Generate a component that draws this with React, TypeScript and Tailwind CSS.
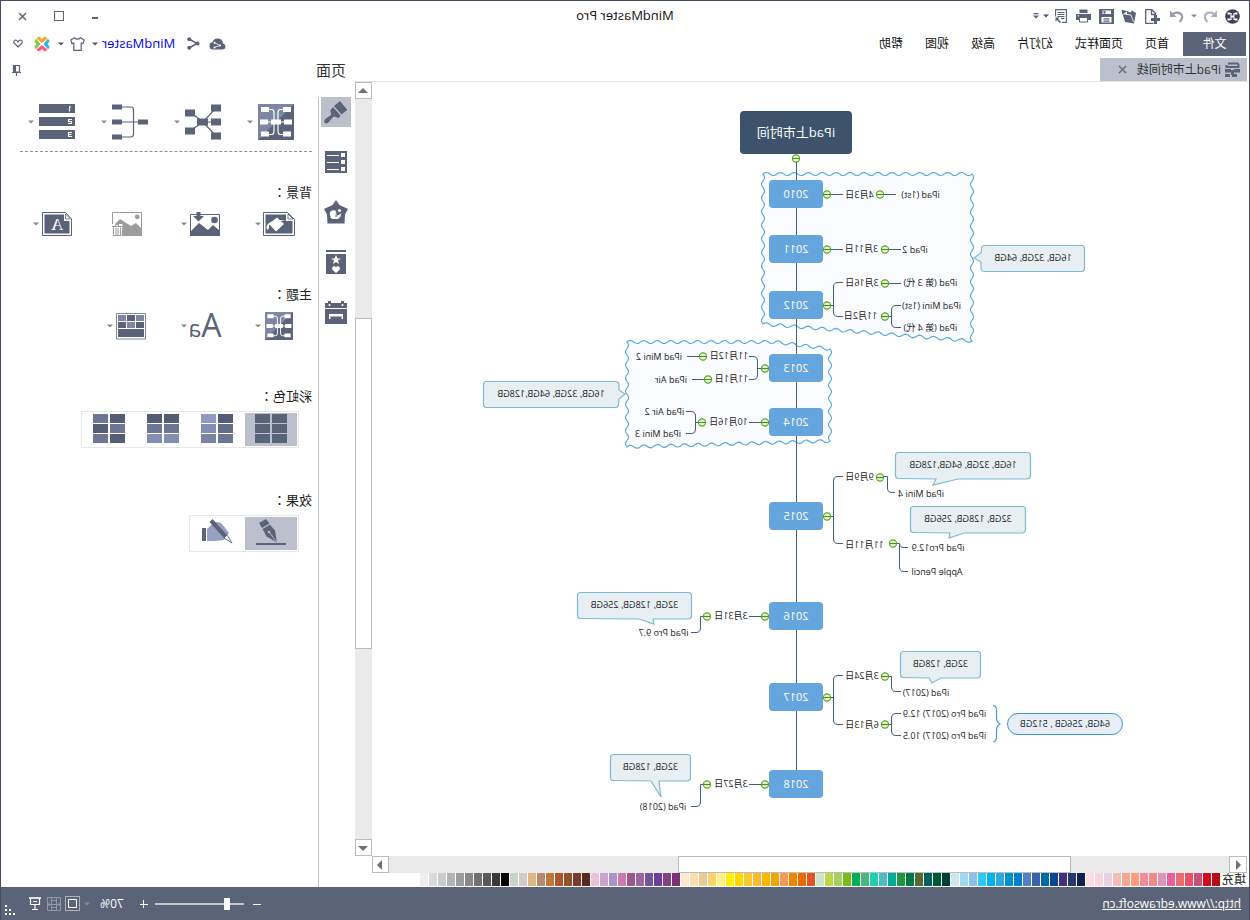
import type { ReactNode } from "react";

const paletteColors = [
  "#b5081b", "#d7091f", "#c75178", "#e85264", "#ea6b70", "#e5609c", "#e195b4", "#ef8c87", "#f18d9b", "#ff9e78",
  "#f1a993", "#f5bcbc", "#e8d3e5", "#fdd2e2", "#fddde2", "#10214d", "#243a70", "#45307a", "#084890", "#0069a6",
  "#3d62ac", "#5382c3", "#0080d0", "#0090cc", "#2ea8e0", "#00b2f0", "#2fc8f8", "#8bc1e9", "#9dd8ee", "#cce9f3",
  "#003f33", "#005930", "#00625e", "#566b30", "#007a47", "#1f9640", "#00ab9b", "#4fbdbd", "#1fcdb0", "#48b87d",
  "#00b052", "#7db916", "#a3d062", "#bed748", "#cde5c9", "#e5531e", "#ed6a00", "#f08300", "#f39b56", "#f2a500",
  "#fdb400", "#fdb732", "#f9c931", "#ffd900", "#fff000", "#fdf180", "#fdd370", "#eacb97", "#fddcae", "#fde9d0",
  "#7b3070", "#854086", "#68429a", "#75539b", "#9a65a1", "#9e5888", "#cc7bb0", "#ab92d1", "#c8a5c9", "#ecc1dc",
  "#5a2a1a", "#763c30", "#95502c", "#aa5828", "#bf783c", "#b5896f", "#deb684", "#d4cbc6", "#c8d3cb", "#000000",
  "#3e3838", "#595959", "#707270", "#878887", "#9b9d9c", "#b2b4b3", "#cacccb", "#dadada", "#ededed",
];

const menus = ["首页", "页面样式", "幻灯片", "高级", "视图", "帮助"];

type Point = [number, number];

const years: { label: string; y: number }[] = [
  { label: "2010", y: 98 },
  { label: "2011", y: 153 },
  { label: "2012", y: 209 },
  { label: "2013", y: 272 },
  { label: "2014", y: 326 },
  { label: "2015", y: 420 },
  { label: "2016", y: 520 },
  { label: "2017", y: 601 },
  { label: "2018", y: 688 },
];

/* Topic labels: x and w span the text, y is its middle line. */
const topics: { text: string; x: number; w: number; y: number }[] = [
  { text: "4月3日", x: 376, w: 27, y: 113 },
  { text: "iPad (1st)", x: 309, w: 39, y: 113 },
  { text: "3月11日", x: 372, w: 31, y: 167 },
  { text: "iPad 2", x: 321, w: 26, y: 168 },
  { text: "3月16日", x: 371, w: 32, y: 201 },
  { text: "iPad (第 3 代)", x: 291, w: 55, y: 201 },
  { text: "11月2日", x: 373, w: 31, y: 234 },
  { text: "iPad Mini (1st)", x: 288, w: 59, y: 224 },
  { text: "iPad (第 4 代)", x: 291, w: 55, y: 246 },
  { text: "11月12日", x: 502, w: 36, y: 274 },
  { text: "iPad Mini 2", x: 567, w: 46, y: 275 },
  { text: "11月1日", x: 502, w: 31, y: 297 },
  { text: "iPad Air", x: 562, w: 32, y: 298 },
  { text: "10月16日", x: 502, w: 37, y: 340 },
  { text: "iPad Air 2", x: 565, w: 39, y: 330 },
  { text: "iPad Mini 3", x: 568, w: 46, y: 352 },
  { text: "9月9日", x: 376, w: 27, y: 395 },
  { text: "iPad Mini 4", x: 305, w: 46, y: 412 },
  { text: "11月11日", x: 365, w: 39, y: 463 },
  { text: "iPad Pro12.9", x: 284, w: 54, y: 466 },
  { text: "Apple Pencil", x: 286, w: 52, y: 490 },
  { text: "3月31日", x: 502, w: 32, y: 534 },
  { text: "iPad Pro 9.7", x: 560, w: 51, y: 551 },
  { text: "3月24日", x: 371, w: 32, y: 594 },
  { text: "iPad (2017)", x: 300, w: 46, y: 611 },
  { text: "6月13日", x: 371, w: 32, y: 643 },
  { text: "iPad Pro (2017) 12.9", x: 263, w: 83, y: 632 },
  { text: "iPad Pro (2017) 10.5", x: 263, w: 83, y: 654 },
  { text: "3月27日", x: 502, w: 32, y: 702 },
  { text: "iPad (2018)", x: 563, w: 46, y: 725 },
];

const toggles: Point[] = [
  [453, 76], [422, 112], [369, 112], [422, 167], [364, 167], [422, 223], [364, 201], [364, 234],
  [484, 286], [546, 274], [541, 297], [484, 340], [547, 340], [422, 434], [369, 395], [356, 461],
  [484, 534], [542, 534], [422, 615], [364, 594], [364, 642], [484, 702], [542, 702],
];

const connectors = [
  "M452.5 80V688",
  "M418 112.5H406M365 112.5H353",
  "M418 167.5H406M360 167.5H348",
  "M418 223.5H415.5M406 200.5H411Q415.5 200.5 415.5 205V230Q415.5 234.5 411 234.5H406",
  "M360 201.5H348M360 234.5H357.5M348 223.5H353Q357.5 223.5 357.5 228V241Q357.5 245.5 353 245.5H348",
  "M488 286.5H491.5M500 274.5H496Q491.5 274.5 491.5 279V293Q491.5 297.5 496 297.5H500",
  "M550 274.5H562M545 297.5H557M488 340.5H500M551 340.5H553.5",
  "M563 329.5H558Q553.5 329.5 553.5 334V347Q553.5 351.5 558 351.5H563",
  "M418 434.5H415.5M406 394.5H411Q415.5 394.5 415.5 399V457Q415.5 461.5 411 461.5H406",
  "M365 394.5H361.5V406Q361.5 410.5 357 410.5H354",
  "M352 461.5H349.5V485Q349.5 489.5 345 489.5H341M349.5 461.5Q349.5 465.5 345 465.5H341",
  "M488 534.5H500M546 534.5H548.5V546Q548.5 550.5 553 550.5H558",
  "M418 615.5H415.5M406 593.5H411Q415.5 593.5 415.5 598V638Q415.5 642.5 411 642.5H406",
  "M360 594.5H357.5V605Q357.5 609.5 353 609.5H348",
  "M360 642.5H357.5M348 631.5H353Q357.5 631.5 357.5 636V649Q357.5 653.5 353 653.5H348",
  "M488 702.5H500M546 702.5H548.5V720Q548.5 724.5 553 724.5H558",
];

/* Callouts: the tail is three points, ordered clockwise round the box. */
const callouts: { text: string; x: number; y: number; w: number; side: "left" | "right" | "bottom"; tail: Point[] }[] = [
  { text: "16GB, 32GB, 64GB", x: 164, y: 163, w: 104, side: "right", tail: [[268, 171], [275, 176], [268, 180]] },
  { text: "16GB, 32GB, 64GB,128GB", x: 630, y: 299, w: 136, side: "left", tail: [[630, 317], [624, 312], [630, 308]] },
  { text: "16GB, 32GB, 64GB,128GB", x: 218, y: 370, w: 136, side: "bottom", tail: [[313, 397], [316, 403], [291, 397]] },
  { text: "32GB, 128GB, 256GB", x: 223, y: 424, w: 116, side: "bottom", tail: [[299, 451], [300, 456], [285, 451]] },
  { text: "32GB, 128GB, 256GB", x: 557, y: 510, w: 115, side: "bottom", tail: [[610, 537], [595, 542], [596, 537]] },
  { text: "32GB, 128GB", x: 268, y: 569, w: 81, side: "bottom", tail: [[320, 596], [317, 601], [308, 596]] },
  { text: "32GB, 128GB", x: 558, y: 672, w: 81, side: "bottom", tail: [[598, 699], [588, 715], [590, 699]] },
];

const CALLOUT_H = 26;

function calloutPath(c: (typeof callouts)[number]) {
  const l = c.x + 0.5;
  const t = c.y + 0.5;
  const r = c.x + c.w - 0.5;
  const b = c.y + CALLOUT_H + 0.5;
  const tail = "L" + c.tail.map((p) => p.join(" ")).join("L");
  return [
    `M${l + 3} ${t}H${r - 3}Q${r} ${t} ${r} ${t + 3}`,
    c.side === "right" ? tail : "",
    `V${b - 3}Q${r} ${b} ${r - 3} ${b}`,
    c.side === "bottom" ? tail : "",
    `H${l + 3}Q${l} ${b} ${l} ${b - 3}`,
    c.side === "left" ? tail : "",
    `V${t + 3}Q${l} ${t} ${l + 3} ${t}Z`,
  ].join("");
}

function wavyOutline(corners: Point[]) {
  const out: string[] = [];
  corners.forEach(([x1, y1], i) => {
    const [x2, y2] = corners[(i + 1) % corners.length];
    const len = Math.hypot(x2 - x1, y2 - y1);
    const turns = Math.max(1, Math.round(len / 14));
    const dx = (x2 - x1) / len;
    const dy = (y2 - y1) / len;
    for (let s = 0; s < len; s += 1) {
      const a = Math.sin((s / len) * turns * Math.PI * 2) * 1.5;
      out.push(`${(x1 + dx * s - dy * a).toFixed(1)} ${(y1 + dy * s + dx * a).toFixed(1)}`);
    }
  });
  return "M" + out.join("L") + "Z";
}

const boundaries: Point[][] = [
  [[277, 92], [486, 92], [486, 242], [277, 259]],
  [[419, 267], [474, 260], [622, 260], [622, 365], [419, 359]],
];

function MindMap() {
  return (
    <div className="relative h-[774px] shrink-0 overflow-hidden">
      <svg className="absolute inset-0 h-full w-full" fill="none" aria-hidden="true">
        {boundaries.map((b, i) => (
          <path key={i} d={wavyOutline(b)} fill="#fafcff" stroke="#5aa9df" strokeWidth="1.2" />
        ))}
        {connectors.map((d) => (
          <path key={d} d={d} stroke="#3f5f85" />
        ))}
        {callouts.map((c) => (
          <path key={c.y} d={calloutPath(c)} fill="#e8eff3" stroke="#7fbbd0" strokeWidth="1.2" />
        ))}
        <path d="M256 623.500Q252.500 624 252.500 628V636Q252.500 640 249 642Q252.500 644 252.500 648V655Q252.500 659.500 256 660" stroke="#3f9ad8" strokeWidth="1.2" />
        {toggles.map(([x, y]) => (
          <g key={`${x}-${y}`} transform={`translate(${x} ${y + 0.5})`}>
            <circle r="3.600" fill="#f0fae4" stroke="#5aa51e" strokeWidth="1.100" />
            <path d="M-3.500 0H3.500" stroke="#4a9a10" strokeWidth="1.200" />
          </g>
        ))}
      </svg>
      <div className="absolute top-[29px] left-[397px] flex h-[43px] w-[112px] items-center justify-center rounded bg-[#3d526b] text-[13px] text-white">
        iPad上市时间
      </div>
      {years.map((n) => (
        <div
          key={n.label}
          className="absolute left-[426px] flex h-7 w-[54px] items-center justify-center rounded bg-[#65a5de] text-[11px] text-white"
          style={{ top: n.y }}
        >
          {n.label}
        </div>
      ))}
      {topics.map((n) => (
        <div
          key={`${n.text}-${n.y}`}
          className="absolute flex h-4 items-center justify-center text-[9px] whitespace-nowrap text-[#222222]"
          style={{ left: n.x, top: n.y - 8, width: n.w }}
        >
          {n.text}
        </div>
      ))}
      {callouts.map((c) => (
        <div
          key={c.y}
          className="absolute flex h-[26px] items-center justify-center text-[9px] whitespace-nowrap text-[#222222]"
          style={{ left: c.x, top: c.y, width: c.w }}
        >
          {c.text}
        </div>
      ))}
      <div className="absolute top-[631px] left-[126px] flex h-[22px] w-[116px] items-center justify-center rounded-full border border-[#3f95d8] bg-[#e7eef8] text-[9px] whitespace-nowrap text-[#222222]">
        64GB, 256GB , 512GB
      </div>
    </div>
  );
}

function Caret({ light = false }: { light?: boolean }) {
  return (
    <svg className={light ? "h-1 w-1.5 shrink-0 text-[#8a8a8a]" : "h-1 w-1.5 shrink-0 text-[#4d5266]"} viewBox="0 0 6 4" fill="currentColor" aria-hidden="true">
      <path d="M0 .5H6L3 3.500Z" />
    </svg>
  );
}

function Icon({ w, h, children }: { w: number; h: number; children: ReactNode }) {
  return (
    <svg width={w} height={h} viewBox={`0 0 ${w} ${h}`} fill="#5b6378" className="shrink-0" aria-hidden="true">
      {children}
    </svg>
  );
}

function BarButton({ label, className, children }: { label: string; className: string; children: ReactNode }) {
  return (
    <button type="button" aria-label={label} className={`flex h-6 shrink-0 items-center justify-center ${className}`}>
      {children}
    </button>
  );
}

function QuickAccess() {
  return (
    <div className="flex items-center pl-1">
      <BarButton label="MindMaster" className="w-6">
        <Icon w={15} h={15}>
          <circle cx="7.500" cy="7.500" r="7.300" fill="#3f445a" />
          <path d="M3.500 4.500H6V7.500H9V4.500H11.500M3.500 10.500H6V7.500H9V10.500H11.500" fill="none" stroke="#fff" strokeWidth="1.100" />
          <path d="M2.500 3.500H5V5.500H2.500ZM10 3.500H12.500V5.500H10ZM2.500 9.500H5V11.500H2.500ZM10 9.500H12.500V11.500H10ZM6.500 6.500H8.500V8.500H6.500Z" fill="#fff" />
        </Icon>
      </BarButton>
      <BarButton label="撤销" className="w-[22px]">
        <Icon w={14} h={13}>
          <path d="M3 3.800Q8.500 1 11.500 4.500Q13.500 8.500 9.500 12" fill="none" stroke="#acaeb6" strokeWidth="2" />
          <path d="M0 .5V7H6.500Z" fill="#acaeb6" />
        </Icon>
      </BarButton>
      <BarButton label="撤销列表" className="w-2.5"><Caret light /></BarButton>
      <BarButton label="重做" className="w-6">
        <Icon w={14} h={13}>
          <path d="M11 3.800Q5.500 1 2.500 4.500Q.5 8.500 4.500 12" fill="none" stroke="#9c9da3" strokeWidth="2.200" />
          <path d="M14 .5V7H7.500Z" fill="#9c9da3" />
        </Icon>
      </BarButton>
      <BarButton label="新建" className="w-6">
        <Icon w={15} h={15}>
          <path d="M4 5L8 .7H14.300V14.300H6.500M8.500 1V5.500H4" fill="none" stroke="#5b6378" strokeWidth="1.300" />
          <path d="M4.500 6V15M0 10.500H9" stroke="#5b6378" strokeWidth="3" />
        </Icon>
      </BarButton>
      <BarButton label="打开" className="w-[23px]">
        <Icon w={16} h={15}>
          <path d="M1 4L5 1.500L6.500 3.500L10 2V5L14.500 4.500L12 13L3 14.500Z" />
          <path d="M3.500 13L6 6L14.500 4.800" fill="none" stroke="#fff" strokeWidth=".8" />
          <path d="M9.500 2.500L15.500 .5L14.500 5.500L12.500 4Z" />
        </Icon>
      </BarButton>
      <BarButton label="保存" className="w-[23px]">
        <Icon w={15} h={15}>
          <path d="M0 0H15V15H0Z" />
          <path d="M3 1.500H11.500V5H3ZM2.500 8H12.500V13.500H2.500Z" fill="#fff" />
          <path d="M8.500 2H10.500V4.500H8.500ZM4.500 9.300H10.500V10.500H4.500ZM4.500 11.500H10.500V12.700H4.500Z" />
        </Icon>
      </BarButton>
      <BarButton label="打印" className="w-[23px]">
        <Icon w={15} h={14}>
          <path d="M3.500 .5H11.500V4H3.500ZM0 5H15V11H0Z" />
          <path d="M3.500 8.500H11.500V13H3.500Z" fill="#fff" stroke="#5b6378" />
          <path d="M12 6.300H13.300V7.500H12Z" fill="#fff" />
        </Icon>
      </BarButton>
      <BarButton label="导出" className="w-[21px]">
        <Icon w={12} h={14}>
          <path d="M5 13.400H.6V.6H11.400V7.500M2.500 3.500H9.500M2.500 5.500H9.500M2.500 7.500H9.500M2.500 9.500H6" fill="none" stroke="#5b6378" strokeWidth="1.100" />
          <path d="M6.500 13.500L10.500 9.500" stroke="#5b6378" strokeWidth="1.600" />
          <path d="M7.500 8.500H11.500V12.500Z" />
        </Icon>
      </BarButton>
      <BarButton label="导出选项" className="w-2.5"><Caret /></BarButton>
      <BarButton label="自定义快速访问" className="w-2.5">
        <Icon w={6} h={6}>
          <path d="M.5 0H5.500V1.200H.5ZM0 2.500H6L3 5.500Z" />
        </Icon>
      </BarButton>
    </div>
  );
}

function WindowControls() {
  return (
    <div className="flex items-center justify-end pr-1">
      <BarButton label="最小化" className="w-9">
        <Icon w={10} h={10}><path d="M2 6H8V8H2Z" fill="#666" /></Icon>
      </BarButton>
      <BarButton label="最大化" className="w-9">
        <Icon w={10} h={10}><path d="M.5 .5H9.500V9.500H.5Z" fill="none" stroke="#666" strokeWidth="1.200" /></Icon>
      </BarButton>
      <BarButton label="关闭" className="w-9">
        <Icon w={9} h={9}><path d="M1 1L8 8M8 1L1 8" stroke="#666" strokeWidth="1.500" /></Icon>
      </BarButton>
    </div>
  );
}

function AccountBar() {
  return (
    <div className="flex items-center pr-[5px]">
      <BarButton label="云" className="w-6">
        <Icon w={17} h={12}>
          <path d="M4 11.500Q.5 11.500 .5 8.500Q.5 6 3 5.500Q3.500 .5 8.500 .5Q12.500 .5 13.300 4Q16.500 4.500 16.500 8Q16.500 11.500 13 11.500Z" />
          <path d="M12 4.500L6 7.500L12 9.500" fill="none" stroke="#fff" strokeWidth=".8" />
          <circle cx="11.500" cy="4.700" r="1" fill="#fff" /><circle cx="6" cy="7.500" r="1" fill="#fff" /><circle cx="11.500" cy="9.500" r="1" fill="#fff" />
        </Icon>
      </BarButton>
      <BarButton label="分享" className="w-6">
        <Icon w={13} h={13}>
          <path d="M11 2L3 6.500L11 11" fill="none" stroke="#5b6378" strokeWidth="1.500" />
          <circle cx="10.700" cy="2.200" r="2" /><circle cx="2.500" cy="6.500" r="2" /><circle cx="10.700" cy="10.800" r="2" />
        </Icon>
      </BarButton>
      <a href="#account" className="ml-1.5 text-[13px] text-[#0000f0]">MindMaster</a>
      <BarButton label="账户" className="ml-0.5 w-2.5"><Caret /></BarButton>
      <BarButton label="皮肤" className="w-6">
        <Icon w={15} h={14}>
          <path d="M4.500 .7L.8 3L2 6.500L3.800 6V13.300H11.200V6L13 6.500L14.200 3L10.500 .7Q7.500 3.500 4.500 .7Z" fill="none" stroke="#5b6378" strokeWidth="1.200" />
        </Icon>
      </BarButton>
      <BarButton label="皮肤选项" className="w-2.5"><Caret /></BarButton>
      <BarButton label="Edraw" className="ml-0.5 w-6">
        <Icon w={16} h={16}>
          <path d="M8 7L2.500 2.500Q3.500 .3 5.500 .8L8 3L10.500 .8Q12.500 .3 13.500 2.500Z" fill="#f7a72a" />
          <path d="M8 9L2.500 13.500Q3.500 15.700 5.500 15.200L8 13L10.500 15.200Q12.500 15.700 13.500 13.500Z" fill="#fb5a84" />
          <path d="M6.500 8L2.200 3Q0 3.500 .6 5.500L2.500 8L.6 10.500Q0 12.500 2.200 13Z" fill="#33b3e5" />
          <path d="M9.500 8L13.800 3Q16 3.500 15.400 5.500L13.500 8L15.400 10.500Q16 12.500 13.800 13Z" fill="#8cc63f" />
        </Icon>
      </BarButton>
      <BarButton label="收藏" className="w-6">
        <Icon w={10} h={9}>
          <path d="M5 8L1 4Q.2 1.500 2.500 1Q4 1 5 3Q6 1 7.500 1Q9.800 1.500 9 4Z" fill="none" stroke="#5b6378" strokeWidth="1.200" />
        </Icon>
      </BarButton>
    </div>
  );
}

function ScrollArrow({ label, dir, className }: { label: string; dir: "up" | "down" | "left" | "right"; className: string }) {
  const d = { up: "M0 7L5 2L10 7Z", down: "M0 3L5 8L10 3Z", left: "M7 0L2 5L7 10Z", right: "M3 0L8 5L3 10Z" }[dir];
  return (
    <button type="button" aria-label={label} className={`flex shrink-0 items-center justify-center border border-[#bcbcbc] bg-white ${className}`}>
      <svg width="10" height="10" viewBox="0 0 10 10" fill="#707070" aria-hidden="true"><path d={d} /></svg>
    </button>
  );
}

function MapGlyph({ size }: { size: number }) {
  return (
    <svg width={size} height={size} viewBox="0 0 36 36" aria-hidden="true">
      <path d="M0 0H36V36H0Z" fill="#5b6378" />
      <path d="M0 0H36V36Z" fill="#7d86a2" />
      <path d="M9 5.500H14Q16 5.500 16 9V27Q16 30.500 14 30.500H9M27 5.500H22Q20 5.500 20 9V27Q20 30.500 22 30.500H27M8 18H28" fill="none" stroke="#fff" strokeWidth="1.200" />
      <path d="M3 3H11V8H3ZM25 3H33V8H25ZM2 15.500H10V20.500H2ZM26 15.500H34V20.500H26ZM3 27.500H11V32.500H3ZM25 27.500H33V32.500H25ZM13 15.500H23V20.500H13Z" fill="#fff" />
    </svg>
  );
}

function RadialGlyph() {
  return (
    <Icon w={36} h={36}>
      <path d="M5 4L18 18L31 8M5 18H18M5 32L18 18L31 27" fill="none" stroke="#5b6378" strokeWidth="1.200" />
      <path d="M0 .5H10V7.500H0ZM0 14.500H10V21.500H0ZM0 28.500H10V35.500H0ZM26 5.500H36V12.500H26ZM26 23.500H36V30.500H26ZM13 14.500H24V21.500H13Z" />
    </Icon>
  );
}

function BracketGlyph() {
  return (
    <Icon w={36} h={36}>
      <path d="M0 18H36M26 3H17Q14.500 3 14.500 6V30Q14.500 33 17 33H26" fill="none" stroke="#5b6378" strokeWidth="1.200" />
      <path d="M0 15.500H10V20.500H0ZM26 .5H36V5.500H26ZM26 15.500H36V20.500H26ZM26 30.500H36V35.500H26Z" />
    </Icon>
  );
}

function NumberedGlyph() {
  return (
    <Icon w={36} h={36}>
      <path d="M0 0H36V9H0ZM0 13H36V22H0ZM0 26H36V35H0Z" />
      <path d="M4 3.500L5.500 2.500V7.500M3 15.500H6.500V17.500H3.500V19.500H7M3 28.500H6.500V32.500H3M3.500 30.500H6.500" fill="none" stroke="#fff" strokeWidth="1.100" />
    </Icon>
  );
}

function FillGlyph() {
  return (
    <Icon w={32} h={24}>
      <path d="M7.500 .5H31.500V23.500H.5V7.500Z" fill="#fff" stroke="#5b6378" />
      <path d="M9 2.500H29.500V21.500H2.500V9H9Z" />
      <path d="M2 7L7 2V7Z" fill="#fff" stroke="#5b6378" strokeWidth=".8" />
      <path d="M11 12L18 5.500L26 12L19 19.500Z" fill="#fff" />
      <path d="M9 8.500Q20 7 26 11Q30 14 27.500 18Q25.500 17 26 13L19 9.500Z" fill="#fff" />
    </Icon>
  );
}

function InsertPictureGlyph() {
  return (
    <Icon w={30} h={24}>
      <path d="M.5 2.500H29.500V23.500H.5Z" fill="#fff" stroke="#5b6378" />
      <circle cx="5.500" cy="8" r="3.300" />
      <path d="M0 24V19L7 13L12 18L21 11L30 20V24Z" />
      <path d="M19.500 0H23.500V4H27L21.500 9.500L16 4H19.500Z" />
    </Icon>
  );
}

function RemovePictureGlyph() {
  return (
    <Icon w={30} h={24}>
      <path d="M.5 .5H29.500V23.500H.5Z" fill="#fff" stroke="#9d9d9d" />
      <circle cx="4.800" cy="4.800" r="2.400" fill="#9d9d9d" />
      <path d="M0 24V17L6 11L11 14L22 7L30 15V24Z" fill="#9d9d9d" />
      <path d="M19.500 12H31V25H20.500Z" fill="#fff" />
      <path d="M20 14.500H30M23.500 14V12.500H26.500V14M21.500 15.500V23.500H28.500V15.500M24 16V23M26 16V23" fill="none" stroke="#9d9d9d" />
    </Icon>
  );
}

function WatermarkGlyph() {
  return (
    <svg width="30" height="24" viewBox="0 0 30 24" aria-hidden="true">
      <path d="M6.500 .5H29.500V23.500H.5V7Z" fill="#fff" stroke="#5b6378" />
      <path d="M8 2.500H27.500V21.500H2.500V9H8Z" fill="#5b6378" />
      <path d="M1.500 7L6.500 2V7Z" fill="#fff" stroke="#5b6378" strokeWidth=".8" />
      <text x="15" y="18" textAnchor="middle" className="font-['Liberation_Serif',serif] text-[17px]" fill="#fff">A</text>
    </svg>
  );
}

function TableGlyph() {
  return (
    <Icon w={30} h={27}>
      <path d="M.5 .5H29.500V26H.5Z" fill="#fff" stroke="#7d86a2" />
      <path d="M2 2H10V8H2ZM20 2H28V8H20ZM11 9H19V15H11Z" fill="#7d86a2" />
      <path d="M11 2H19V8H11ZM2 9H10V15H2ZM20 9H28V15H20ZM2 16H28V24H2Z" />
    </Icon>
  );
}

function GridGlyph({ colors }: { colors: string[] }) {
  return (
    <Icon w={32} h={29}>
      {colors.map((c, i) => (
        <rect key={i} x={(i % 2) * 17} y={Math.floor(i / 2) * 10} width="15" height="9" fill={c} />
      ))}
    </Icon>
  );
}

const rainbowGrids = [
  ["#5b6378", "#5b6378", "#5b6378", "#5b6378", "#5b6378", "#5b6378"],
  ["#555d74", "#8f9cc0", "#646c88", "#838fb2", "#6d7694", "#7983a4"],
  ["#555d74", "#555d74", "#6d7694", "#6d7694", "#838fb2", "#838fb2"],
  ["#555d74", "#6d7694", "#6d7694", "#555d74", "#555d74", "#6d7694"],
];

function PenGlyph() {
  return (
    <Icon w={32} h={26}>
      <path d="M1 24H31V26H1Z" />
      <path d="M28 4L21 0L17.500 4.500L25 9Z" />
      <path d="M24.500 10L17 5.800L12 11.500L10 23.500L20.500 17.500Z" />
      <path d="M10.500 23L17.500 13.500" stroke="#bbc0cc" strokeWidth=".9" />
      <circle cx="18" cy="13" r="1.300" fill="#bbc0cc" />
    </Icon>
  );
}

function HandGlyph() {
  return (
    <Icon w={32} h={26}>
      <path d="M27 9H31V22H27Z" />
      <path d="M26 10L19 3.500Q14 2 11 5L4 14L9 21L18 22H26Z" fill="#95a0c2" />
      <path d="M20.500 0L23.500 3L9 19L6 16Z" />
      <path d="M6 16L9 19L1 24Z" fill="#fff" stroke="#5b6378" strokeWidth=".9" />
    </Icon>
  );
}

function ToolItem({ label, className, iconClass, caret = true, children }: { label: string; className: string; iconClass: string; caret?: boolean; children: ReactNode }) {
  return (
    <button type="button" aria-label={label} className={`flex shrink-0 items-center ${className}`}>
      <span className={`flex shrink-0 items-center justify-center ${iconClass}`}>{children}</span>
      {caret && <Caret light />}
    </button>
  );
}

function SectionTitle({ children }: { children: ReactNode }) {
  return (
    <h3>
      {children}
      <span className="font-['Noto_Sans_CJK_TC',sans-serif]">：</span>
    </h3>
  );
}

function SideTabs() {
  return (
    <nav aria-label="面板" className="flex w-[37px] shrink-0 flex-col gap-5 border-r border-[#c4c4c4] pl-1">
      <button type="button" aria-label="页面" className="flex h-[30px] w-[30px] items-center justify-center bg-[#bbc0cc]">
        <Icon w={24} h={23}>
          <path d="M8 0L.7 9L6.500 13.500L14 5Z" />
          <path d="M15 6L7.500 14.500L9.500 17L14.500 15.500L19.500 21.500Q22 23.500 23.500 21.500Q24.500 19.500 22 17.500L17 14L17.500 9Z" />
        </Icon>
      </button>
      <button type="button" aria-label="大纲" className="flex h-[30px] w-[30px] items-center justify-center">
        <Icon w={22} h={22}>
          <path d="M0 0H22V22H0Z" />
          <path d="M2 2H6V6H2ZM2 9H6V13H2ZM2 16H6V20H2ZM8 4H20V5H8ZM8 11H20V12H8ZM8 18H20V19H8Z" fill="#fff" />
        </Icon>
      </button>
      <button type="button" aria-label="图标" className="flex h-[30px] w-[30px] items-center justify-center">
        <Icon w={24} h={24}>
          <path d="M12 0L15.500 5L24 9L21 14.500L20.500 23.500H3.500L3 14.500L0 9L8.500 5Z" />
          <circle cx="14.500" cy="14" r="3.700" fill="#fff" /><circle cx="8.500" cy="10.500" r="1.600" fill="#fff" />
          <path d="M6.500 13Q9 16 18 17L16 19H10Q7 17 6.500 13Z" fill="#fff" />
          <path d="M11.500 10L12 17" stroke="#5b6378" />
        </Icon>
      </button>
      <button type="button" aria-label="剪贴画" className="flex h-[30px] w-[30px] items-center justify-center">
        <Icon w={20} h={24}>
          <path d="M0 0H20V2H0ZM0 4H20V24H0Z" />
          <path d="M10 5L11.500 8.500H15L12 10.500L13 14L10 12L7 14L8 10.500L5 8.500H8.500ZM10 23L6.200 19.500Q5.800 16 8.500 16L10 17L11.500 16Q14.200 16 13.800 19.500Z" fill="#fff" />
        </Icon>
      </button>
      <button type="button" aria-label="任务" className="flex h-[30px] w-[30px] items-center justify-center">
        <Icon w={22} h={23}>
          <path d="M0 2H3V0H6V2H16V0H19V2H22V7H0ZM0 8H22V23H0Z" />
          <circle cx="4.500" cy="4" r="1" fill="#fff" /><circle cx="17.500" cy="4" r="1" fill="#fff" />
          <path d="M4 13H18V18H16.500V15.500H5.500V18H4Z" fill="#fff" />
        </Icon>
      </button>
    </nav>
  );
}

function PagePanel() {
  return (
    <aside className="flex w-[354px] shrink-0 flex-col">
      <header className="flex h-[41px] shrink-0 items-center justify-between pr-[11px] pb-3 pl-[9px]">
        <h2 className="text-[15px] text-[#333333]">页面</h2>
        <button type="button" aria-label="固定">
          <Icon w={9} h={11}>
            <path d="M1.500 .5H7.500V7H1.500ZM0 7.500H9M4.500 8V11" fill="none" stroke="#5b6378" strokeWidth="1.200" />
            <path d="M5 0H8V7H5Z" />
          </Icon>
        </button>
      </header>
      <div className="flex flex-1">
        <SideTabs />
        <div className="flex flex-1 flex-col pr-[19px] pl-1.5 text-[13px] leading-5 text-[#222222]">
          <div className="flex border-b border-dashed border-[#8f8f99] pt-[7px] pb-[11px] pl-[18px]">
            <ToolItem label="布局" className="w-[73px] gap-[5px]" iconClass="w-9"><MapGlyph size={36} /></ToolItem>
            <ToolItem label="分布" className="w-[73px] gap-[5px]" iconClass="w-9"><RadialGlyph /></ToolItem>
            <ToolItem label="连接线" className="w-[73px] gap-[5px]" iconClass="w-9"><BracketGlyph /></ToolItem>
            <ToolItem label="编号" className="w-12 gap-[5px]" iconClass="w-9"><NumberedGlyph /></ToolItem>
          </div>
          <section className="mt-[30px]">
            <SectionTitle>背景</SectionTitle>
            <div className="mt-2 flex pl-[17px]">
              <ToolItem label="背景颜色" className="w-[74px] gap-0.5" iconClass="h-7 w-8"><FillGlyph /></ToolItem>
              <ToolItem label="插入图片" className="w-[74px] gap-0.5" iconClass="h-7 w-8"><InsertPictureGlyph /></ToolItem>
              <ToolItem label="移除图片" className="w-[74px] gap-0.5 pl-1" iconClass="h-7 w-8" caret={false}><RemovePictureGlyph /></ToolItem>
              <ToolItem label="水印" className="w-10 gap-0.5" iconClass="h-7 w-8"><WatermarkGlyph /></ToolItem>
            </div>
          </section>
          <section className="mt-[46px]">
            <SectionTitle>主题</SectionTitle>
            <div className="mt-2 flex pl-[17px]">
              <ToolItem label="主题样式" className="w-[74px] gap-0.5" iconClass="h-7 w-8"><MapGlyph size={28} /></ToolItem>
              <ToolItem label="主题字体" className="w-[74px] gap-0.5" iconClass="h-7 w-8">
                <span className="flex items-baseline leading-7 text-[#5b6378]">
                  <span className="text-[32px]">A</span>
                  <span className="text-[23px]">a</span>
                </span>
              </ToolItem>
              <ToolItem label="主题颜色" className="w-10 gap-0.5" iconClass="h-7 w-8"><TableGlyph /></ToolItem>
            </div>
          </section>
          <section className="mt-[46px]">
            <SectionTitle>彩虹色</SectionTitle>
            <div className="mt-[5px] ml-[13px] flex w-fit gap-0.5 border border-[#e8e8e8] p-px">
              {rainbowGrids.map((colors, i) => (
                <button
                  key={i}
                  type="button"
                  aria-label={`彩虹色 ${i + 1}`}
                  aria-pressed={i === 0}
                  className="flex h-[33px] w-[52px] items-start justify-center pt-px aria-pressed:bg-[#bbc0cc]"
                >
                  <GridGlyph colors={colors} />
                </button>
              ))}
            </div>
          </section>
          <section className="mt-[42px]">
            <SectionTitle>效果</SectionTitle>
            <div className="mt-[5px] ml-[13px] flex w-fit gap-0.5 border border-[#e8e8e8] p-px">
              <button type="button" aria-label="钢笔" aria-pressed className="flex h-[33px] w-[52px] items-start justify-center bg-[#bbc0cc] pt-0.5">
                <PenGlyph />
              </button>
              <button type="button" aria-label="手绘" className="flex h-[33px] w-[52px] items-start justify-center pt-0.5">
                <HandGlyph />
              </button>
            </div>
          </section>
        </div>
      </div>
    </aside>
  );
}

function StatusBar() {
  return (
    <footer className="flex h-[33px] shrink-0 items-center bg-[#5b6378] pl-2 text-white">
      <a href="http://www.edrawsoft.cn" className="text-[12px] underline">http://www.edrawsoft.cn</a>
      <div className="ml-auto flex h-full items-center">
        <button type="button" aria-label="缩小" className="flex w-3 justify-center">
          <svg width="8" height="8" viewBox="0 0 8 8" fill="none" stroke="#fff" aria-hidden="true"><path d="M0 4.500H8" /></svg>
        </button>
        <input
          type="range"
          aria-label="缩放"
          min={10}
          max={400}
          defaultValue={74}
          className="mx-[7px] h-4 w-[89px] appearance-none bg-transparent [&::-webkit-slider-runnable-track]:h-0.5 [&::-webkit-slider-runnable-track]:bg-[#c4c6cc] [&::-webkit-slider-thumb]:-mt-[5px] [&::-webkit-slider-thumb]:h-3 [&::-webkit-slider-thumb]:w-1.5 [&::-webkit-slider-thumb]:appearance-none [&::-webkit-slider-thumb]:bg-white"
        />
        <button type="button" aria-label="放大" className="flex w-2 justify-center">
          <svg width="8" height="8" viewBox="0 0 8 8" fill="none" stroke="#fff" aria-hidden="true"><path d="M0 4.500H8M4.500 0V8" /></svg>
        </button>
        <span className="ml-3.5 w-7 text-center text-[12px]">70%</span>
        <button type="button" aria-label="缩放选项" className="mr-1 ml-2"><Caret light /></button>
        <button type="button" aria-label="适合页面" className="mr-1">
          <svg width="15" height="15" viewBox="0 0 15 15" fill="none" stroke="#fff" aria-hidden="true">
            <path d="M.5 .5H14.500V14.500H.5Z" strokeDasharray="1 1" />
            <path d="M3.500 3.500H11.500V11.500H3.500Z" />
          </svg>
        </button>
        <button type="button" aria-label="适合宽度" className="mr-1.5">
          <svg width="14" height="14" viewBox="0 0 14 14" fill="none" stroke="#9298aa" aria-hidden="true">
            <path d="M.5 .5H13.500V13.500H.5ZM4.500 1V13M9.500 1V13M1 7.500H13M2 5.500V9M12 5.500V9" />
            <path d="M4.500 3.500H9.500V10.500H4.500Z" />
          </svg>
        </button>
        <button type="button" aria-label="演示" className="mr-3.5">
          <svg width="12" height="13" viewBox="0 0 12 13" fill="none" stroke="#fff" aria-hidden="true">
            <path d="M0 1H12" strokeWidth="1.600" />
            <path d="M1.500 1.500V7.500H10.500V1.500M4 4.500H8M6 8V12M3 12.500H9" strokeWidth="1.200" />
          </svg>
        </button>
        <svg width="12" height="12" viewBox="0 0 12 12" fill="#fff" className="mt-auto mr-0.5 mb-1" aria-hidden="true">
          <path d="M8 1H10V3H8ZM8 5H10V7H8ZM4 5H6V7H4ZM8 9H10V11H8ZM4 9H6V11H4ZM0 9H2V11H0Z" />
        </svg>
      </div>
    </footer>
  );
}

export default function App() {
  return (
    <div className="flex min-h-screen -scale-x-100 flex-col border-x border-t border-[#484b62] bg-white font-['Open_Sans','Noto_Sans_CJK_SC',sans-serif] text-[12px] text-[#111111]">
      <header className="grid h-[30px] shrink-0 grid-cols-[1fr_auto_1fr] items-center">
        <QuickAccess />
        <h1 className="text-[13px]">MindMaster Pro</h1>
        <WindowControls />
      </header>

      <div className="flex h-[25px] shrink-0 items-center justify-between">
        <nav aria-label="菜单" className="flex items-center pl-[3px]">
          <button type="button" className="mr-[3px] h-6 w-[63px] bg-[#5b6378] text-white">文件</button>
          {menus.map((m) => (
            <button key={m} type="button" className="h-6 px-[11px]">{m}</button>
          ))}
        </nav>
        <AccountBar />
      </div>

      <div className="flex flex-1">
        <div className="flex min-w-0 flex-1 flex-col">
          <div className="flex shrink-0 border-b border-[#e4e4e4] pt-0.5 pl-0.5">
            <div className="flex h-[23px] w-[147px] items-center bg-[#bbc0cc] pl-[7px] text-[#333333]">
              <Icon w={16} h={15}>
                <path d="M2 .5H12V3H14.500V6H.5V2ZM0 7H6V10.500H0ZM9 7H15V10.500H9ZM3 12H8V15H3ZM10 12H15V15H10ZM6 8H9V13H6Z" />
                <path d="M2.500 2.500H12.500V4H2.500Z" fill="#bbc0cc" />
              </Icon>
              <span className="ml-[3px] whitespace-nowrap">iPad上市时间线</span>
              <button type="button" aria-label="关闭标签" className="ml-auto pr-[18px]">
                <Icon w={9} h={9}><path d="M1 1L8 8M8 1L1 8" stroke="#666" strokeWidth="1.300" /></Icon>
              </button>
            </div>
          </div>

          <div className="flex flex-1">
            <main className="flex min-w-0 flex-1 flex-col">
              <MindMap />
              <div className="flex h-[17px] shrink-0 pl-0.5">
                <ScrollArrow label="向左滚动" dir="left" className="w-[18px]" />
                <div className="flex flex-1 bg-[#eaeaea]">
                  <div className="flex-[158]" />
                  <div className="flex-[392] border border-[#bcbcbc] bg-white" />
                  <div className="flex-[290]" />
                </div>
                <ScrollArrow label="向右滚动" dir="right" className="w-[17px]" />
              </div>
              <div className="flex h-3.5 shrink-0 items-start pl-[3px]">
                <span className="w-[26px] text-[12px] leading-3.5 whitespace-nowrap text-[#222222]">填充</span>
                <div className="flex gap-px">
                  {paletteColors.map((c) => (
                    <button key={c} type="button" aria-label={c} className="h-[13px] w-2" style={{ backgroundColor: c }} />
                  ))}
                </div>
              </div>
            </main>
            <div className="flex h-[774px] w-[17px] shrink-0 flex-col bg-[#eaeaea]">
              <ScrollArrow label="向上滚动" dir="up" className="h-[17px]" />
              <div className="flex flex-1 flex-col">
                <div className="flex-[220]" />
                <div className="flex-[329] border border-[#bcbcbc] bg-white" />
                <div className="flex-[191]" />
              </div>
              <ScrollArrow label="向下滚动" dir="down" className="h-[17px]" />
            </div>
          </div>
        </div>
        <PagePanel />
      </div>

      <StatusBar />
    </div>
  );
}
